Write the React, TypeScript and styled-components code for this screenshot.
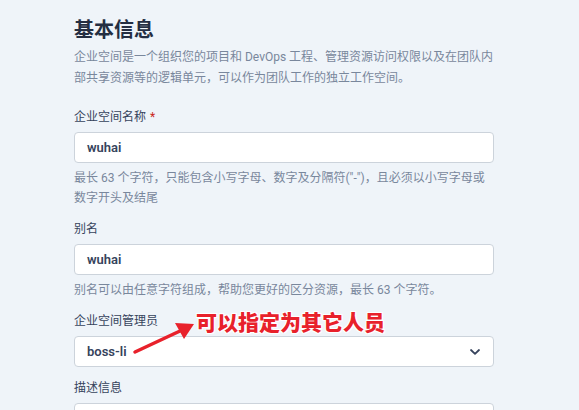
import React from 'react';
import styled, { createGlobalStyle } from 'styled-components';

const GlobalStyle = createGlobalStyle`
  html, body {
    margin: 0;
    padding: 0;
    background: #eff4f9;
  }
  body {
    font-family: Roboto, "Noto Sans CJK SC", sans-serif;
    color: #36435c;
  }
`;

const Page = styled.div`
  position: relative;
  width: 579px;
  height: 410px;
  overflow: hidden;
  padding: 16px 0 0 74px;
  box-sizing: border-box;
`;

const Form = styled.div`
  width: 420px;
  display: flex;
  flex-direction: column;
`;

const Title = styled.h2`
  margin: 0;
  font-size: 20px;
  line-height: 28px;
  font-weight: 700;
  color: #242e42;
`;

const Description = styled.p`
  margin: 3px 0 18px;
  font-size: 12px;
  line-height: 21px;
  color: #79879c;
`;

const Field = styled.div`
  display: flex;
  flex-direction: column;
  margin-bottom: 11px;
`;

const Label = styled.label`
  font-size: 12px;
  line-height: 20px;
  color: #36435c;
  margin-bottom: 5px;

  .required {
    color: #ca2621;
    margin-left: 4px;
  }
`;

const Input = styled.div`
  height: 31px;
  box-sizing: border-box;
  border: 1px solid #ccd3db;
  border-radius: 4px;
  background: #fff;
  padding: 0 12px;
  display: flex;
  align-items: center;
  justify-content: space-between;
  font-size: 13px;
  font-weight: 600;
  color: #36435c;
`;

const TextArea = styled.div`
  height: 80px;
  border: 1px solid #ccd3db;
  border-radius: 4px;
  background: #fff;
`;

const Help = styled.div`
  margin-top: 5px;
  font-size: 12px;
  line-height: 20px;
  color: #79879c;
`;

const Callout = styled.div`
  position: absolute;
  left: 196px;
  top: 306px;
  font-family: "Noto Sans CJK SC", sans-serif;
  font-size: 21px;
  font-weight: 900;
  line-height: 30px;
  color: #e8212b;
  text-shadow: 0 0 2px #fff, 1px 1px 0 #fff, -1px -1px 0 #fff, 1px -1px 0 #fff, -1px 1px 0 #fff;
`;

const Arrow = styled.svg`
  position: absolute;
  left: 130px;
  top: 318px;
`;

const Chevron = () => (
  <svg width="12" height="8" viewBox="0 0 12 8">
    <path d="M2 2 L6 5.8 L10 2" fill="none" stroke="#36435c" strokeWidth="1.8" strokeLinecap="round" strokeLinejoin="round" />
  </svg>
);

export default function App() {
  return (
    <>
      <GlobalStyle />
      <Page>
        <Form>
          <Title>基本信息</Title>
          <Description>
            企业空间是一个组织您的项目和 DevOps 工程、管理资源访问权限以及在团队内部共享资源等的逻辑单元，可以作为团队工作的独立工作空间。
          </Description>

          <Field>
            <Label>企业空间名称<span className="required">*</span></Label>
            <Input>wuhai</Input>
            <Help>最长 63 个字符，只能包含小写字母、数字及分隔符("-")，且必须以小写字母或数字开头及结尾</Help>
          </Field>

          <Field>
            <Label>别名</Label>
            <Input>wuhai</Input>
            <Help>别名可以由任意字符组成，帮助您更好的区分资源，最长 63 个字符。</Help>
          </Field>

          <Field>
            <Label>企业空间管理员</Label>
            <Input>
              boss-li
              <Chevron />
            </Input>
          </Field>

          <Field>
            <Label>描述信息</Label>
            <TextArea />
          </Field>
        </Form>

        <Callout>可以指定为其它人员</Callout>
        <Arrow width="70" height="40" viewBox="0 0 70 40">
          <line x1="5" y1="34" x2="50" y2="13" stroke="#e8212b" strokeWidth="3.5" strokeLinecap="round" />
          <polygon points="64,6 45,5 54,21" fill="#e8212b" />
        </Arrow>
      </Page>
    </>
  );
}
